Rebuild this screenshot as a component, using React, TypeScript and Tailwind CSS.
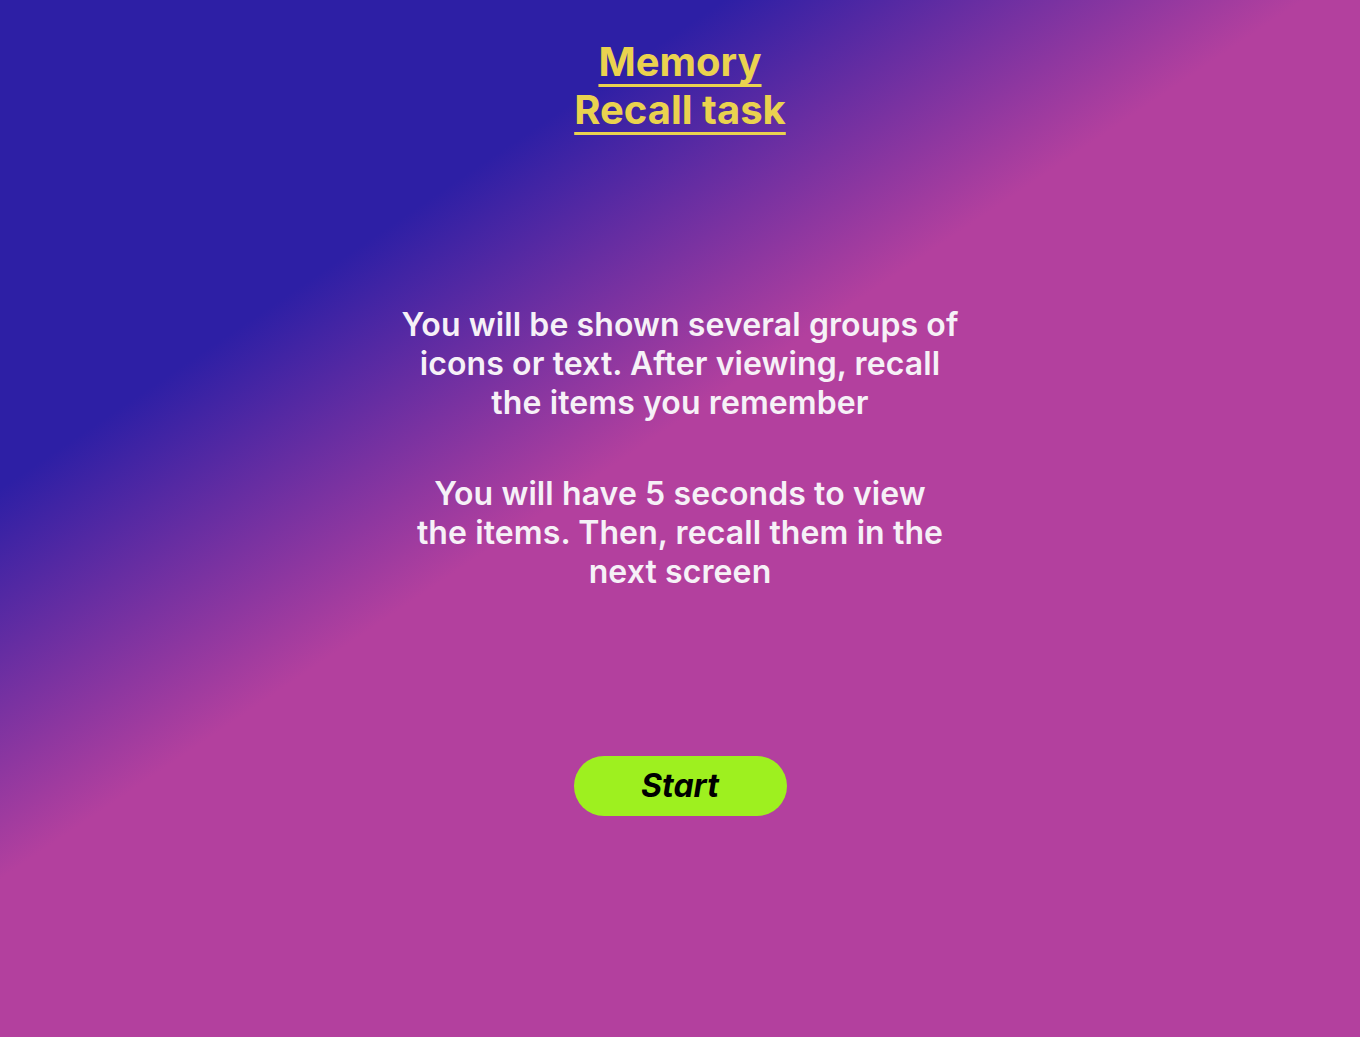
export default function App() {
  return (
    <div
      className="min-h-screen w-full flex flex-col items-center bg-[linear-gradient(146deg,#2d1fa5_0%,#2d1fa5_25%,#b3409e_45%,#b3409e_100%)] text-center"
      style={{ fontFamily: 'Inter, "Noto Sans", sans-serif' }}
    >
      <h1 className="mt-[38px] w-[240px] text-[40px] leading-[48px] font-bold text-[#ead24f] underline decoration-[3px] underline-offset-[8px]">
        Memory Recall task
      </h1>

      <p className="mt-[171px] w-[566px] text-[32px] leading-[39px] font-semibold tracking-[0.1px] text-[#f6f1f7]">
        You will be shown several groups of icons or text. After viewing, recall the items you remember
      </p>

      <p className="mt-[52px] w-[534px] text-[32px] leading-[39px] font-semibold tracking-[0.1px] text-[#f6f1f7]">
        You will have 5 seconds to view the items. Then, recall them in the next screen
      </p>

      <button className="mt-[165px] w-[213px] h-[60px] rounded-full bg-[#9ef01f] text-black text-[32px] font-bold italic">
        Start
      </button>
    </div>
  );
}
